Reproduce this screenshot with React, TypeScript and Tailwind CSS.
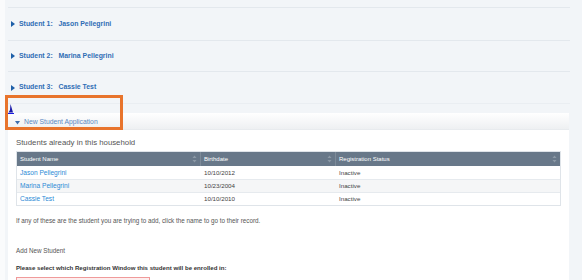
const students = [
  { n: 1, name: 'Jason Pellegrini' },
  { n: 2, name: 'Marina Pellegrini' },
  { n: 3, name: 'Cassie Test' },
];

const rows = [
  { name: 'Jason Pellegrini', birth: '10/10/2012', status: 'Inactive' },
  { name: 'Marina Pellegrini', birth: '10/23/2004', status: 'Inactive' },
  { name: 'Cassie Test', birth: '10/10/2010', status: 'Inactive' },
];

function SortIcon() {
  return (
    <svg width="5" height="8" viewBox="0 0 5 8" className="shrink-0">
      <path d="M2.5 0.5 L4.5 3 H0.5 Z" fill="#8c99a6" />
      <path d="M2.5 7.5 L4.5 5 H0.5 Z" fill="#8c99a6" />
    </svg>
  );
}

export default function App() {
  return (
    <div
      className="relative flex w-[582px] h-[280px] overflow-hidden bg-[#f2f5f8]"
      style={{ fontFamily: '"Liberation Sans", Arial, sans-serif' }}
    >
      <div className="w-[5px] shrink-0 bg-[#fafbfc]" />
      <div className="flex-1 flex flex-col pl-[3px] pr-[12px]">
        <div className="h-[8px] shrink-0 border-b border-[#e3e8ed]" />
        {students.map((s, i) => (
          <div
            key={s.n}
            className={`shrink-0 flex items-center pl-[3px] border-b ${
              i === 0 ? 'h-[33px] border-[#e3e8ed]' : i === 1 ? 'h-[31px] border-[#e3e8ed]' : 'h-[32px] border-[#eaeef2]'
            }`}
          >
            <svg width="4" height="6" viewBox="0 0 4 6" className="mr-[4px]">
              <path d="M0 0 L4 3 L0 6 Z" fill="#1e5fa8" />
            </svg>
            <span className="text-[6.9px] font-bold text-[#2f6db5] whitespace-pre">
              {`Student ${s.n}:   ${s.name}`}
            </span>
          </div>
        ))}
        <div className="h-[9px] shrink-0" />
        <div className="flex-1 bg-white mr-[1px]">
          <div className="h-[17px] flex items-center pt-[3px] pl-[7px] bg-gradient-to-b from-white to-[#eef0f2] border-b border-[#e8ebee]">
            <svg width="5" height="4" viewBox="0 0 5 4" className="mr-[4px]">
              <path d="M0 0 H5 L2.5 3.5 Z" fill="#3d6fae" />
            </svg>
            <span className="text-[6.8px] text-[#5a88c2]">New Student Application</span>
          </div>
          <div className="px-[8px]">
            <div className="h-[21px] flex items-end pb-[2px] text-[7.8px] text-[#555]">
              Students already in this household
            </div>
            <div className="border border-[#dfe4e9] text-[6px]">
              <div className="grid grid-cols-[184px_135px_1fr] h-[14px] bg-[#687889] text-white">
                <div className="flex items-center justify-between px-[3px] border-r border-[#7d8b99]">
                  <span>Student Name</span>
                  <SortIcon />
                </div>
                <div className="flex items-center justify-between px-[3px] border-r border-[#7d8b99]">
                  <span>Birthdate</span>
                  <SortIcon />
                </div>
                <div className="flex items-center justify-between px-[3px]">
                  <span>Registration Status</span>
                  <SortIcon />
                </div>
              </div>
              {rows.map((r, i) => (
                <div
                  key={r.name}
                  className={`grid grid-cols-[184px_135px_1fr] h-[13px] items-center ${
                    i === 1 ? 'bg-[#f5f6f7]' : 'bg-white'
                  } ${i > 0 ? 'border-t border-[#e6eaee]' : ''}`}
                >
                  <span className="px-[3px] text-[6.6px] text-[#2b8ad6]">{r.name}</span>
                  <span className="px-[3px] text-[6.2px] text-[#444]">{r.birth}</span>
                  <span className="px-[3px] text-[6.2px] text-[#444]">{r.status}</span>
                </div>
              ))}
            </div>
            <div className="mt-[10px] text-[6.3px] text-[#555]">
              If any of these are the student you are trying to add, click the name to go to their record.
            </div>
            <div className="mt-[21px] text-[6.3px] text-[#555]">Add New Student</div>
            <div className="mt-[7px] text-[6.1px] font-bold text-[#333]">
              Please select which Registration Window this student will be enrolled in:
            </div>
            <div className="mt-[5px] w-[134px] h-[10px] border border-[#f09a9a] bg-[#fdeeee]" />
          </div>
        </div>
      </div>

      <svg width="6" height="10" viewBox="0 0 6 10" className="absolute left-[8px] top-[104px]">
        <path d="M2.5 0 L2 6 L0.5 8.5 H5 Z" fill="#1a1aa8" />
        <path d="M0 9.5 H6" stroke="#1a1ae0" strokeWidth="1" />
      </svg>
      <div className="absolute left-[5px] top-[95px] w-[118px] h-[35px] border-[3px] border-[#e8742c]" />
    </div>
  );
}
